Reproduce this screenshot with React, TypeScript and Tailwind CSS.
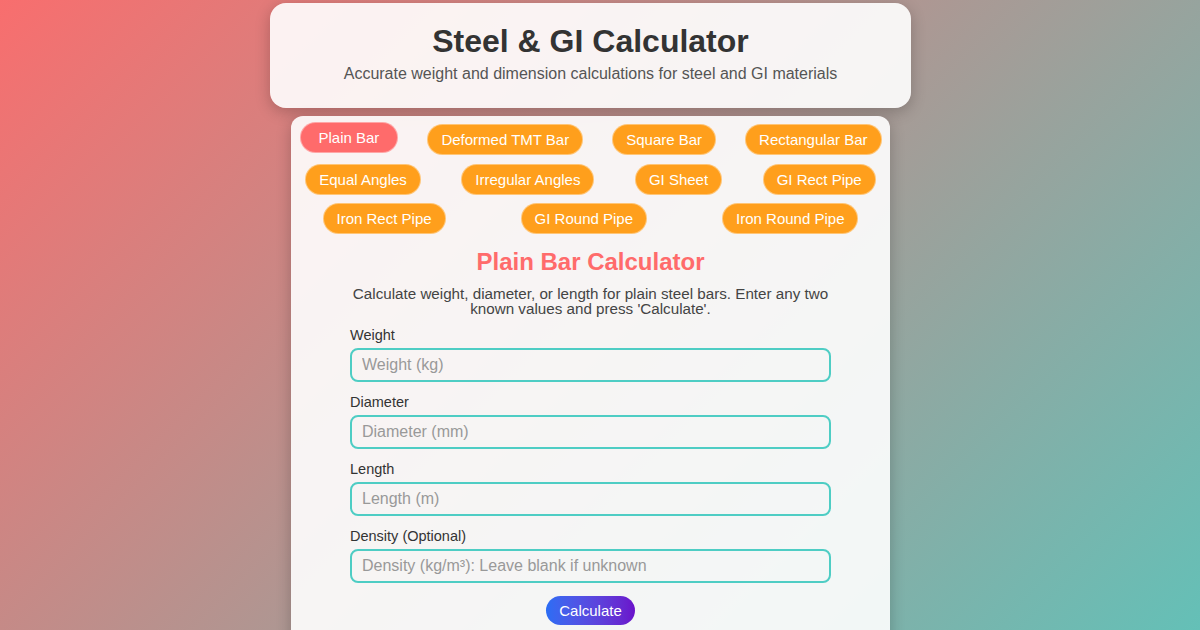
import React from "react";

const rows: string[][] = [
  ["Plain Bar", "Deformed TMT Bar", "Square Bar", "Rectangular Bar"],
  ["Equal Angles", "Irregular Angles", "GI Sheet", "GI Rect Pipe"],
  ["Iron Rect Pipe", "GI Round Pipe", "Iron Round Pipe"],
];

const fields = [
  { label: "Weight", ph: "Weight (kg)" },
  { label: "Diameter", ph: "Diameter (mm)" },
  { label: "Length", ph: "Length (m)" },
  { label: "Density (Optional)", ph: "Density (kg/m³): Leave blank if unknown" },
];

export default function App() {
  return (
    <div
      className="w-[1200px] h-[630px] overflow-hidden bg-[linear-gradient(135deg,#f86e6e,#64c0b7)]"
      style={{ fontFamily: '"Liberation Sans", Arial, sans-serif' }}
    >
      <div className="w-[1181px] flex flex-col items-center pt-[3px]">
        <header className="w-[641px] rounded-[16px] bg-white/90 shadow-[0_4px_15px_rgba(0,0,0,0.22)] pt-[20px] pb-[25px] text-center">
          <h1 className="text-[32px] leading-[37px] font-bold text-[#333]">Steel &amp; GI Calculator</h1>
          <p className="mt-[5px] text-[16px] leading-[18px] text-[#555]">
            Accurate weight and dimension calculations for steel and GI materials
          </p>
        </header>

        <main className="mt-[8px] w-[599px] h-[600px] rounded-t-[12px] bg-white/90 shadow-[0_4px_15px_rgba(0,0,0,0.22)] pt-[8px]">
          <div className="-mx-[6px] flex flex-col gap-[8.5px]">
            {rows.map((row, i) => (
              <div key={i} className="flex justify-around">
                {row.map((name) => {
                  const active = name === "Plain Bar";
                  return (
                    <button
                      key={name}
                      className={
                        active
                          ? "h-[31px] px-[18px] rounded-full bg-[#ff6b6b] text-white text-[15px] leading-[17px] -translate-y-[2px] border border-white/40"
                          : "h-[31px] px-[13px] rounded-full bg-[#ff9f1c] text-white text-[15px] leading-[17px] border border-white/40"
                      }
                    >
                      {name}
                    </button>
                  );
                })}
              </div>
            ))}
          </div>

          <div className="mx-auto w-[481px] flex flex-col items-stretch">
            <h2 className="mt-[14px] text-center text-[24px] leading-[28px] font-bold text-[#ff6b6b]">
              Plain Bar Calculator
            </h2>
            <p className="mt-[10px] text-center text-[15.2px] leading-[15px] text-[#444]">
              Calculate weight, diameter, or length for plain steel bars. Enter any two known values and press 'Calculate'.
            </p>
            <div className="mt-[11px] flex flex-col gap-[12px]">
              {fields.map((f) => (
                <div key={f.label} className="flex flex-col">
                  <label className="text-[14.5px] leading-[16px] text-[#333]">{f.label}</label>
                  <input
                    className="mt-[5px] h-[34px] w-full rounded-[8px] border-2 border-[#4ecdc4] bg-transparent pl-[10px] text-[16px] text-[#333] placeholder:text-[#999] outline-none"
                    placeholder={f.ph}
                  />
                </div>
              ))}
            </div>
            <div className="mt-[13px] flex justify-center">
              <button className="h-[29px] px-[13px] rounded-full bg-gradient-to-r from-[#2a6df4] to-[#6a11cb] text-white text-[15px] leading-[17px]">
                Calculate
              </button>
            </div>
          </div>
        </main>
      </div>
    </div>
  );
}
